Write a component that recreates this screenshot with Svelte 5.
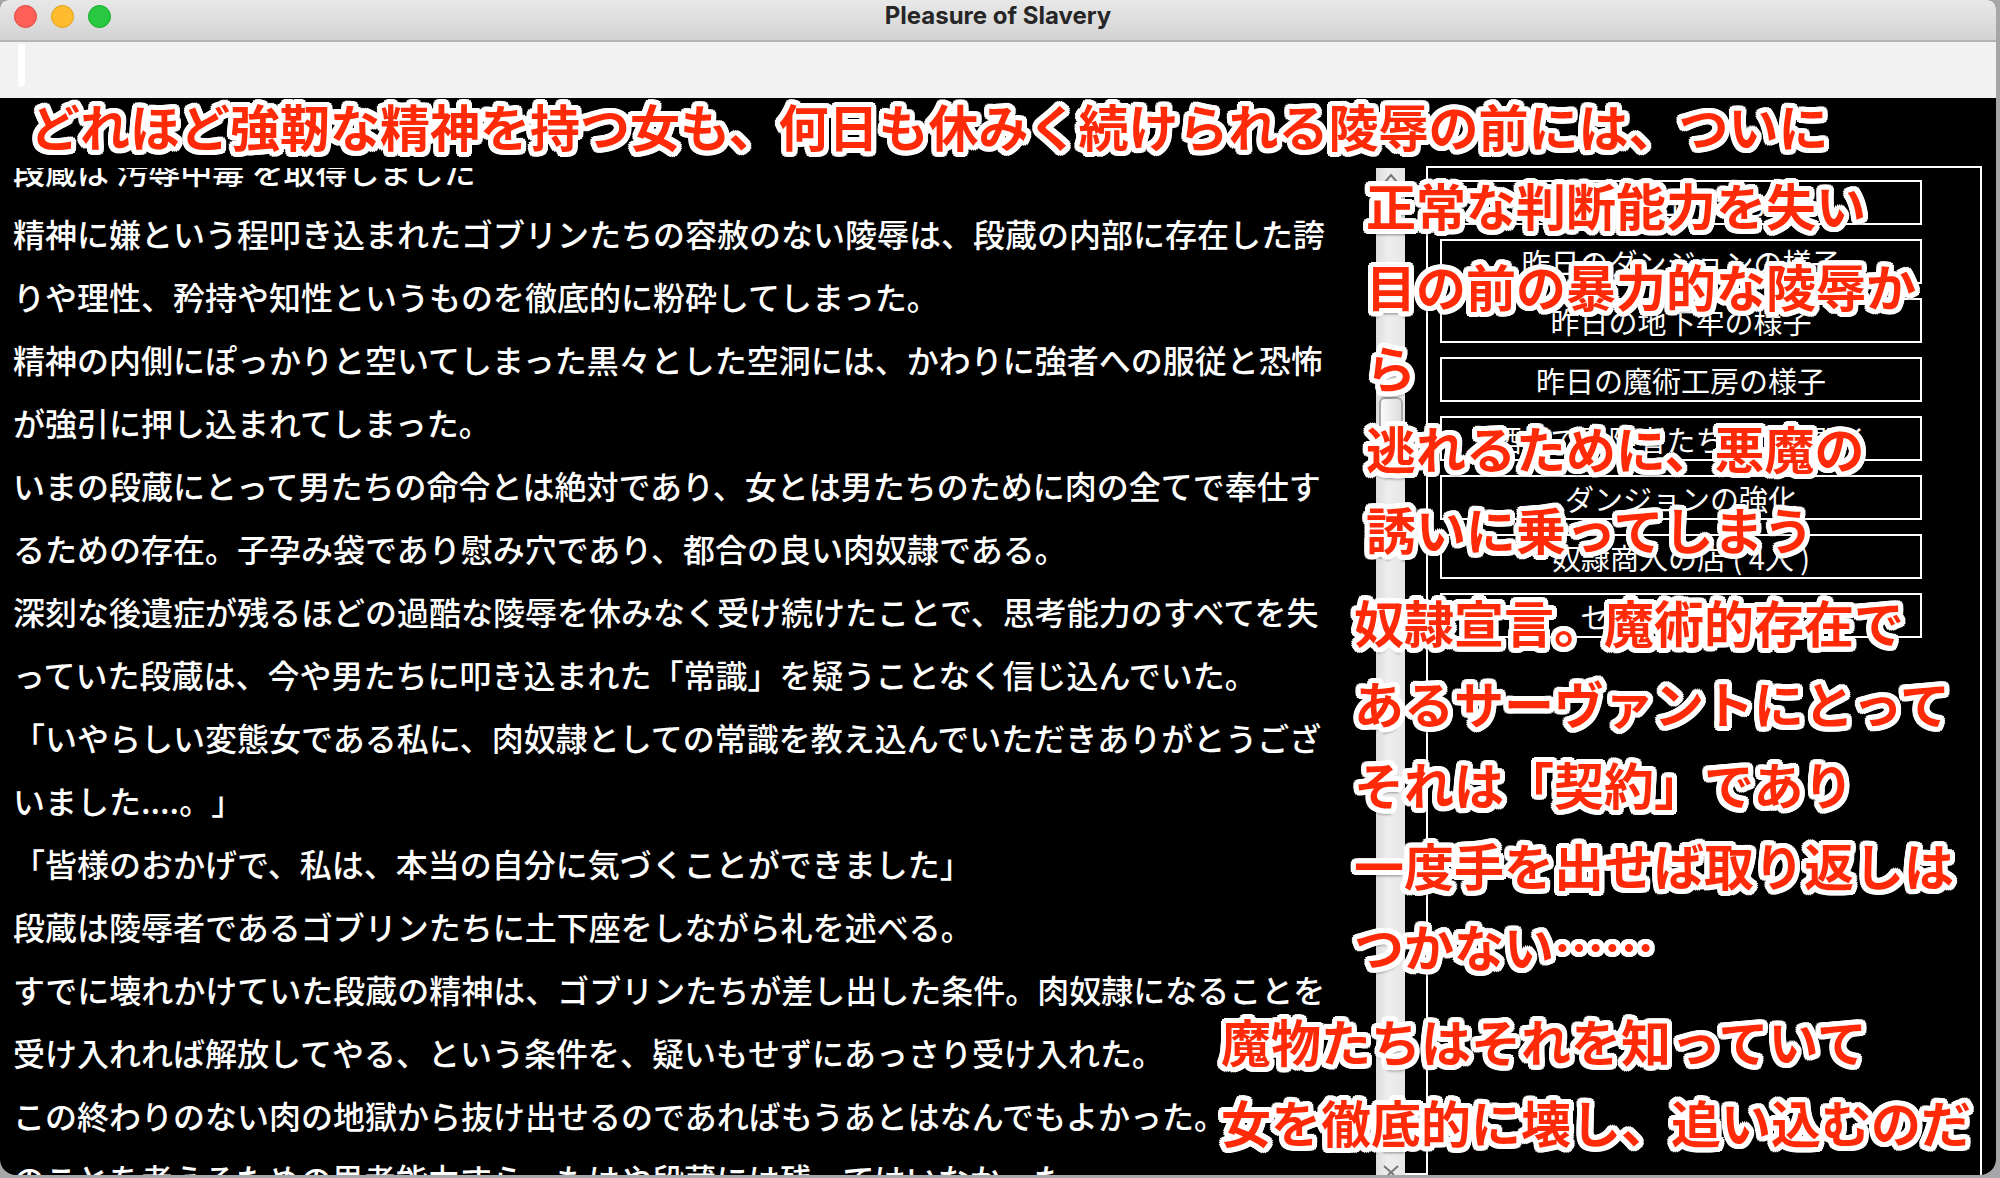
<script>
const story = [
    '段蔵は 汚辱中毒 を取得しました',
    '精神に嫌という程叩き込まれたゴブリンたちの容赦のない陵辱は、段蔵の内部に存在した誇',
    'りや理性、矜持や知性というものを徹底的に粉砕してしまった。',
    '精神の内側にぽっかりと空いてしまった黒々とした空洞には、かわりに強者への服従と恐怖',
    'が強引に押し込まれてしまった。',
    'いまの段蔵にとって男たちの命令とは絶対であり、女とは男たちのために肉の全てで奉仕す',
    'るための存在。子孕み袋であり慰み穴であり、都合の良い肉奴隷である。',
    '深刻な後遺症が残るほどの過酷な陵辱を休みなく受け続けたことで、思考能力のすべてを失',
    'っていた段蔵は、今や男たちに叩き込まれた「常識」を疑うことなく信じ込んでいた。',
    '「いやらしい変態女である私に、肉奴隷としての常識を教え込んでいただきありがとうござ',
    'いました....。」',
    '「皆様のおかげで、私は、本当の自分に気づくことができました」',
    '段蔵は陵辱者であるゴブリンたちに土下座をしながら礼を述べる。',
    'すでに壊れかけていた段蔵の精神は、ゴブリンたちが差し出した条件。肉奴隷になることを',
    '受け入れれば解放してやる、という条件を、疑いもせずにあっさり受け入れた。',
    'この終わりのない肉の地獄から抜け出せるのであればもうあとはなんでもよかった。',
    'のことを考えるための思考能力すら、もはや段蔵には残ってはいなかった。'
];

const actions = [
    '次の日へ進む',
    '昨日のダンジョンの様子',
    '昨日の地下牢の様子',
    '昨日の魔術工房の様子',
    '酒場で冒険者たちの噂を聞く',
    'ダンジョンの強化',
    '奴隷商人の店 ( 4人 )',
    'セーブ・ロード'
];

const notes = [
    { place: 'top', lines: ['どれほど強靭な精神を持つ女も、何日も休みく続けられる陵辱の前には、ついに'] },
    { place: 'upper', lines: ['正常な判断能力を失い', '目の前の暴力的な陵辱か', 'ら', '逃れるために、悪魔の', '誘いに乗ってしまう'] },
    { place: 'middle', lines: ['奴隷宣言。魔術的存在で', 'あるサーヴァントにとって', 'それは「契約」であり', '一度手を出せば取り返しは', 'つかない⋯⋯'] },
    { place: 'lower', lines: ['魔物たちはそれを知っていて', '女を徹底的に壊し、追い込むのだ'] }
];
</script>

<div class="desktop">
    <div class="window">
        <header class="titlebar">
            <div class="lights">
                <button class="light red" aria-label="Close"></button>
                <button class="light yellow" aria-label="Minimize"></button>
                <button class="light green" aria-label="Zoom"></button>
            </div>
            <h1>Pleasure of Slavery</h1>
        </header>

        <div class="toolbar"><span class="handle"></span></div>

        <main>
            <section class="story">
                {#each story as line}
                    <p>{line}</p>
                {/each}
            </section>

            <div class="scrollbar">
                <svg class="arrow" viewBox="0 0 16 10"><path d="M2 9 L8 2 L14 9" /></svg>
                <div class="thumb"></div>
                <svg class="arrow" viewBox="0 0 16 10"><path d="M1 1 L11 10 M15 1 L5 10" /></svg>
            </div>
            <div class="gutter"></div>

            <nav class="panel">
                {#each actions as action}
                    <button>{action}</button>
                {/each}
            </nav>
        </main>
    </div>

    {#each notes as note}
        <div class="note {note.place}">
            {#each note.lines as line}
                <p>{line}</p>
            {/each}
        </div>
    {/each}
</div>

<style>
:global(body) {
    margin: 0;
    background: #a6a6a8;
}

p, h1 {
    margin: 0;
}

.desktop {
    position: relative;
    height: 100vh;
    box-sizing: border-box;
    padding: 0 4px 3px 0;
    overflow: hidden;
    font-family: "Noto Sans CJK JP", "Noto Sans", sans-serif;
    text-spacing-trim: space-all;
}

.window {
    display: flex;
    flex-direction: column;
    height: 100%;
    background: #000;
    border-radius: 8px 8px 16px 16px;
    overflow: hidden;
}

.titlebar {
    display: grid;
    grid-template-columns: 1fr auto 1fr;
    flex: none;
    height: 42px;
    box-sizing: border-box;
    padding: 0 14px;
    border-bottom: 2px solid #b5b5b5;
    background: linear-gradient(#e8e8e8, #d3d3d3);
}

.lights {
    display: flex;
    gap: 14px;
    padding-top: 5px;
}

.light {
    width: 23px;
    height: 23px;
    padding: 0;
    border: 1px solid;
    border-radius: 50%;
}

.red {
    background: #fe5f57;
    border-color: #e2463f;
}

.yellow {
    background: #febc2e;
    border-color: #e1a116;
}

.green {
    background: #28c840;
    border-color: #12ac28;
}

h1 {
    font: 700 24px/31px Inter, "Noto Sans", sans-serif;
    color: #262626;
}

.toolbar {
    flex: none;
    height: 56px;
    box-sizing: border-box;
    padding: 2px 18px;
    background: #f2f2f2;
}

.handle {
    display: block;
    width: 7px;
    height: 43px;
    border-radius: 0 0 4px 4px;
    background: #fff;
}

main {
    display: flex;
    flex: 1;
    min-height: 0;
    box-sizing: border-box;
    padding: 68px 14px 0 13px;
}

.story {
    flex: 1;
    min-width: 0;
    margin-top: 2px;
    overflow: hidden;
    color: #fff;
    font-size: 32px;
    line-height: 63px;
    font-weight: 500;
    white-space: nowrap;
}

.story p:first-child {
    margin-top: -29px;
}

.scrollbar {
    display: flex;
    flex-direction: column;
    align-items: center;
    justify-content: space-between;
    width: 29px;
    margin-top: 2px;
    box-sizing: border-box;
    padding-top: 5px;
    background: linear-gradient(90deg, #dcdcdc, #eee 40%, #e6e6e6);
}

.arrow {
    width: 16px;
    height: 10px;
    fill: none;
    stroke: #777;
    stroke-width: 2;
}

.thumb {
    width: 20px;
    height: 50px;
    margin: 214px 0 auto;
    border: 2px solid #a8a8a8;
    border-radius: 6px;
    background: linear-gradient(90deg, #fafafa, #dedede);
}

.gutter {
    width: 21px;
    border-bottom: 2px solid #fff;
}

.panel {
    display: flex;
    flex-direction: column;
    gap: 14px;
    width: 556px;
    box-sizing: border-box;
    padding: 12px 58px 0 12px;
    border: 2px solid #fff;
    border-bottom: 0;
}

.panel button {
    flex: none;
    height: 45px;
    padding: 0;
    border: 2px solid #fff;
    background: #000;
    color: #fff;
    font: 400 29px/36px "Noto Sans CJK JP", sans-serif;
}

/* white rim drawn as a ring of shadows, so its corners stay round */
.note {
    position: absolute;
    color: #ff2a08;
    font-size: 50px;
    line-height: 81px;
    font-weight: 700;
    white-space: nowrap;
    text-shadow:
        5px 0 #fff, -5px 0 #fff, 0 5px #fff, 0 -5px #fff,
        5px 2px #fff, 5px -2px #fff, -5px 2px #fff, -5px -2px #fff,
        2px 5px #fff, 2px -5px #fff, -2px 5px #fff, -2px -5px #fff,
        4px 4px #fff, 4px -4px #fff, -4px 4px #fff, -4px -4px #fff,
        2px 2px #fff, 2px -2px #fff, -2px 2px #fff, -2px -2px #fff,
        0 6px 3px rgba(0, 0, 0, 0.4);
}

.top {
    top: 85px;
    left: 30px;
}

.upper {
    top: 164px;
    left: 1366px;
}

.middle {
    top: 581px;
    left: 1354px;
}

.lower {
    top: 1000px;
    left: 1221px;
}
</style>
